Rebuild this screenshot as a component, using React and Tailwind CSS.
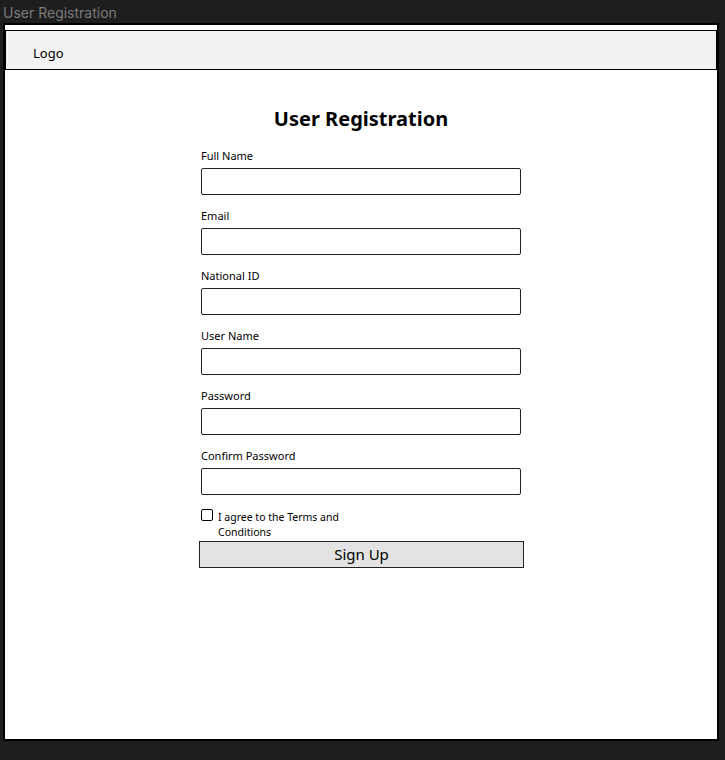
import React from 'react'

const fields = ['Full Name', 'Email', 'National ID', 'User Name', 'Password', 'Confirm Password'];

const Field = ({ label }) => (
  <div className="flex flex-col mb-[14px]">
    <label className="text-[11px] leading-[14px] text-black px-[3px]">{label}</label>
    <div className="mt-[5px] mx-[3px] h-[27px] border-[1.5px] border-[#222] rounded-[2px] bg-white" />
  </div>
);

export default function App() {
  return (
    <div className="h-[760px] w-[725px] bg-[#1e1e1e] relative overflow-hidden" style={{ fontFamily: '"Noto Sans", "DejaVu Sans", sans-serif' }}>
      <div className="h-[23px] pl-[3px] pt-[4px] text-[14px] leading-[18px] text-[#7a7a7a]" style={{ fontFamily: 'Inter, "Noto Sans", sans-serif' }}>
        User Registration
      </div>
      <div className="ml-[3px] w-[716px] h-[718px] bg-white border-2 border-black flex flex-col">
        <div className="mt-[5px] h-[40px] bg-[#f2f2f2] border border-black flex items-center pl-[27px] pt-[7px]">
          <span className="text-[13px] text-black">Logo</span>
        </div>
        <div className="flex flex-col items-center pt-[34px]">
          <div className="w-[326px] flex flex-col">
            <h1 className="text-[20px] font-bold text-black text-center leading-[30px] mb-[15px]">User Registration</h1>
            {fields.map((f) => (
              <Field key={f} label={f} />
            ))}
            <div className="flex items-start px-[3px]">
              <div className="w-[12px] h-[12px] border-[1.5px] border-black rounded-[2px]" />
              <span className="ml-[5px] text-[10.5px] leading-[15px] text-black w-[135px] pt-[1px]">I agree to the Terms and Conditions</span>
            </div>
            <button className="mt-[1px] ml-[1px] h-[27px] w-[325px] bg-[#e3e3e3] border-[1.5px] border-[#222] text-[15px] text-black flex items-center justify-center">
              Sign Up
            </button>
          </div>
        </div>
      </div>
    </div>
  );
}
